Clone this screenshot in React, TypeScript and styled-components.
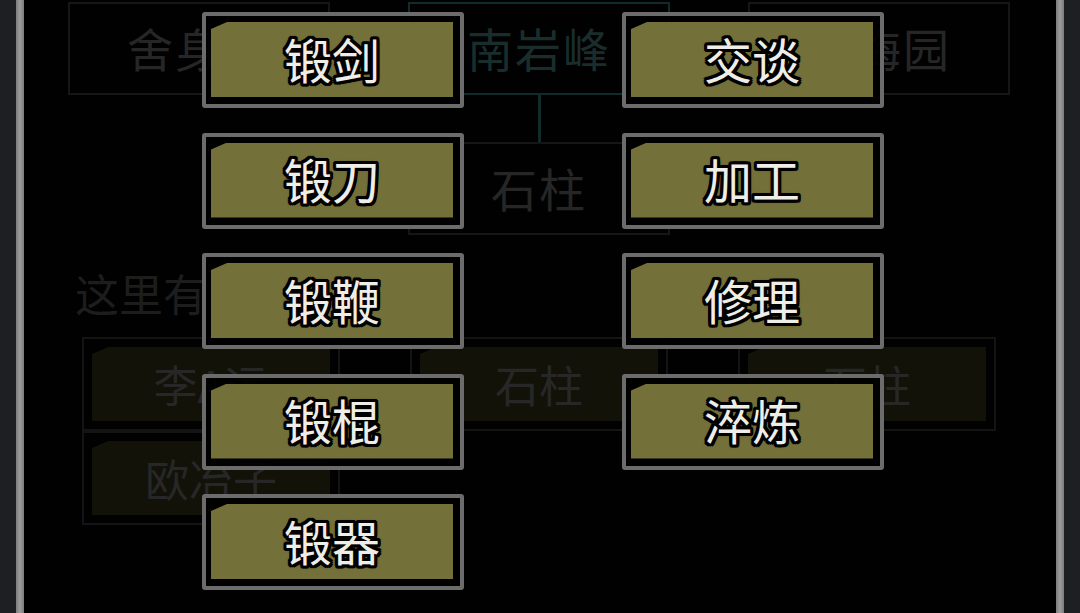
import React from "react";
import styled, { createGlobalStyle } from "styled-components";

const GlobalStyle = createGlobalStyle`
    html, body {
        margin: 0;
        padding: 0;
        background: #000;
        overflow: hidden;
    }
    body {
        font-family: "Noto Sans CJK SC", "Noto Sans", sans-serif;
    }
`;

const mapRow = [
    { name: "舍身崖", current: false },
    { name: "南岩峰", current: true },
    { name: "椰梅园", current: false },
];

const people = [
    { name: "李A远", col: 1, row: 1 },
    { name: "石柱", col: 2, row: 1 },
    { name: "石柱", col: 3, row: 1 },
    { name: "欧冶子", col: 1, row: 2 },
];

const leftActions = ["锻剑", "锻刀", "锻鞭", "锻棍", "锻器"];
const rightActions = ["交谈", "加工", "修理", "淬炼"];

export default () => {
    return (
        <>
            <GlobalStyle />
            <Screen>
                <Gutter />
                <Rail />
                <Content>
                    <MapGrid>
                        <MapBox current={mapRow[0].current}>{mapRow[0].name}</MapBox>
                        <HLink />
                        <MapBox current={mapRow[1].current}>{mapRow[1].name}</MapBox>
                        <HLink />
                        <MapBox current={mapRow[2].current}>{mapRow[2].name}</MapBox>
                        <VLink />
                        <MapBox current={false} style={{ gridColumn: 3 }}>石柱</MapBox>
                    </MapGrid>
                    <HereLabel>这里有：</HereLabel>
                    <PeopleGrid>
                        {people.map((p, i) => (
                            <PersonCell key={i} style={{ gridColumn: p.col, gridRow: p.row }}>
                                <PersonFill>{p.name}</PersonFill>
                            </PersonCell>
                        ))}
                    </PeopleGrid>

                    <Overlay>
                        <ActionColumn>
                            {leftActions.map((a) => (
                                <ActionButton key={a}>
                                    <ActionFill>{a}</ActionFill>
                                </ActionButton>
                            ))}
                        </ActionColumn>
                        <ActionColumn>
                            {rightActions.map((a) => (
                                <ActionButton key={a}>
                                    <ActionFill>{a}</ActionFill>
                                </ActionButton>
                            ))}
                        </ActionColumn>
                    </Overlay>
                </Content>
                <Rail />
                <Gutter />
            </Screen>
        </>
    );
};

const Screen = styled.div`
    display: flex;
    width: 1080px;
    height: 613px;
    background: #010101;
    overflow: hidden;
`;

const Gutter = styled.div`
    width: 16px;
    flex-shrink: 0;
    background: #1d1f22;
`;

const Rail = styled.div`
    width: 8px;
    flex-shrink: 0;
    background: linear-gradient(90deg, #7c7c7c, #9c9c9c 50%, #7c7c7c);
`;

const Content = styled.div`
    position: relative;
    flex: 1;
    background: #010101;
`;

const MapGrid = styled.div`
    display: grid;
    grid-template-columns: 262px 1fr 262px 1fr 262px;
    grid-template-rows: 93px 47px 93px;
    padding: 2px 46px 0 44px;
`;

const MapBox = styled.div<{ current: boolean }>`
    display: flex;
    align-items: center;
    justify-content: center;
    box-sizing: border-box;
    border: 2px solid ${(p) => (p.current ? "#112b2b" : "#161616")};
    color: ${(p) => (p.current ? "#1a2d2d" : "#262626")};
    font-size: 46px;
    line-height: 1;
    padding-bottom: 4px;
    letter-spacing: 2px;
`;

const HLink = styled.div`
    align-self: center;
    height: 2px;
    background: #141414;
`;

const VLink = styled.div`
    grid-column: 3;
    justify-self: center;
    width: 3px;
    background: #112b2b;
`;

const HereLabel = styled.div`
    margin: 30px 0 0 51px;
    height: 72px;
    color: #1d1d1d;
    font-size: 44px;
    line-height: 56px;
`;

const PeopleGrid = styled.div`
    display: grid;
    grid-template-columns: repeat(3, 258px);
    grid-template-rows: 94px 94px;
    column-gap: 70px;
    padding-left: 58px;
`;

const PersonCell = styled.div`
    box-sizing: border-box;
    border: 2px solid #141414;
    padding: 8px;
`;

const PersonFill = styled.div`
    display: flex;
    align-items: center;
    justify-content: center;
    height: 100%;
    background: #121209;
    clip-path: polygon(16px 0, 100% 0, 100% 100%, 0 100%, 0 7px);
    color: #272727;
    font-size: 44px;
    line-height: 1;
`;

const Overlay = styled.div`
    position: absolute;
    inset: 0;
    display: flex;
    gap: 158px;
    padding: 12px 0 0 178px;
`;

const ActionColumn = styled.div`
    display: flex;
    flex-direction: column;
    gap: 24.5px;
    width: 262px;
`;

const ActionButton = styled.div`
    box-sizing: border-box;
    height: 96px;
    border: 4px solid #6c6c6c;
    border-radius: 3px;
    padding: 6px 7px 7px 5px;
    background: rgba(0, 0, 0, 0.92);
`;

const outline = [
    "3px 0 0 #000", "-3px 0 0 #000", "0 3px 0 #000", "0 -3px 0 #000",
    "2px 2px 0 #000", "-2px 2px 0 #000", "2px -2px 0 #000", "-2px -2px 0 #000",
    "3px 2px 0 #000", "-3px 2px 0 #000", "3px -2px 0 #000", "-3px -2px 0 #000",
    "2px 3px 0 #000", "-2px 3px 0 #000", "2px -3px 0 #000", "-2px -3px 0 #000",
    "0 0 4px #000",
].join(", ");

const ActionFill = styled.div`
    display: flex;
    align-items: center;
    justify-content: center;
    height: 100%;
    box-sizing: border-box;
    padding-bottom: 4px;
    background: rgba(124, 121, 62, 0.93);
    clip-path: polygon(16px 0, 100% 0, 100% 100%, 0 100%, 0 7px);
    color: #eeede7;
    font-size: 48px;
    font-weight: 400;
    line-height: 1;
    text-shadow: ${outline};
`;
